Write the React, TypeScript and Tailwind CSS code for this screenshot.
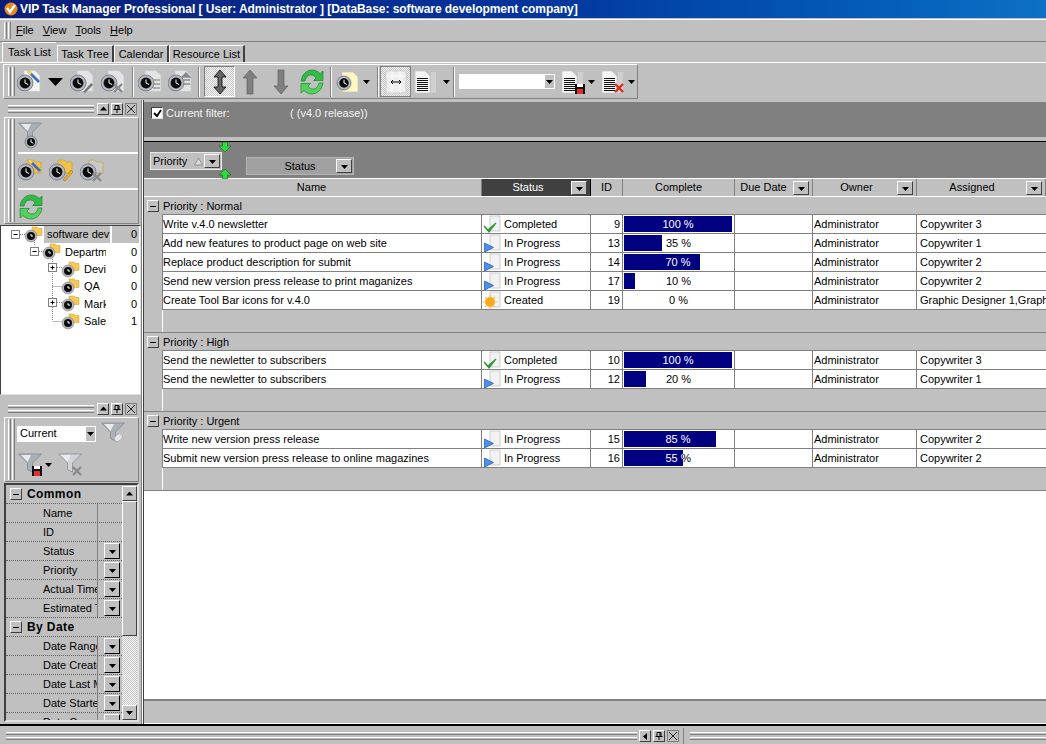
import type { ReactNode } from "react";

const FONT = "font-['Liberation_Sans','Noto_Sans',sans-serif]";

type Task = { name: string; status: string; id: number; pct: number; assigned: string };

const groups: { title: string; tasks: Task[] }[] = [
  {
    title: "Priority : Normal",
    tasks: [
      { name: "Write v.4.0 newsletter", status: "Completed", id: 9, pct: 100, assigned: "Copywriter 3" },
      { name: "Add new features to product page on web site", status: "In Progress", id: 13, pct: 35, assigned: "Copywriter 1" },
      { name: "Replace product description for submit", status: "In Progress", id: 14, pct: 70, assigned: "Copywriter 2" },
      { name: "Send new version press release to print maganizes", status: "In Progress", id: 17, pct: 10, assigned: "Copywriter 2" },
      { name: "Create Tool Bar icons for v.4.0", status: "Created", id: 19, pct: 0, assigned: "Graphic Designer 1,Graphic Designer 2" },
    ],
  },
  {
    title: "Priority : High",
    tasks: [
      { name: "Send the newletter to subscribers", status: "Completed", id: 10, pct: 100, assigned: "Copywriter 3" },
      { name: "Send the newletter to subscribers", status: "In Progress", id: 12, pct: 20, assigned: "Copywriter 1" },
    ],
  },
  {
    title: "Priority : Urgent",
    tasks: [
      { name: "Write new version press release", status: "In Progress", id: 15, pct: 85, assigned: "Copywriter 2" },
      { name: "Submit new version press release to online magazines", status: "In Progress", id: 16, pct: 55, assigned: "Copywriter 2" },
    ],
  },
];

const tree = [
  { label: "software dev", count: 0, indent: 23, selected: true },
  { label: "Departm", count: 0, indent: 41 },
  { label: "Devi", count: 0, indent: 60 },
  { label: "QA", count: 0, indent: 60 },
  { label: "Mark", count: 0, indent: 60 },
  { label: "Sale", count: 1, indent: 60 },
];

const commonRows = [
  { label: "Name" },
  { label: "ID" },
  { label: "Status", btn: true },
  { label: "Priority", btn: true },
  { label: "Actual Time", btn: true },
  { label: "Estimated Time", btn: true },
];
const dateRows = ["Date Range", "Date Created", "Date Last Modified", "Date Started", "Date Completed"];

const Tri = ({ dir = "down", color = "#000" }: { dir?: "down" | "up" | "left"; color?: string }) => (
  <svg width="7" height="7" viewBox="0 0 7 7" className="shrink-0">
    {dir === "down" && <path d="M0 2h7L3.5 6z" fill={color} />}
    {dir === "up" && <path d="M0 5.5h7L3.5 1.5z" fill={color} />}
    {dir === "left" && <path d="M5 0v7L1 3.5z" fill={color} />}
  </svg>
);

const Bevel = ({ className = "", children }: { className?: string; children?: ReactNode }) => (
  <div className={"flex items-center justify-center bg-[#c0c0c0] border border-t-white border-l-white border-r-[#404040] border-b-[#404040] shrink-0 " + className}>
    {children}
  </div>
);

const DropBtn = ({ className = "" }: { className?: string }) => (
  <Bevel className={"w-[16px] h-[14px] " + className}>
    <Tri />
  </Bevel>
);

const Minus = ({ className = "" }: { className?: string }) => (
  <Bevel className={"w-[12px] h-[12px] " + className}>
    <div className="w-[6px] h-px bg-black" />
  </Bevel>
);

// two thin raised lines used as the docking caption
const Grip = ({ className = "" }: { className?: string }) => (
  <div className={"flex flex-col gap-[2px] " + className}>
    <div className="h-[3px] bg-[#c0c0c0] border-y border-t-white border-b-[#808080]" />
    <div className="h-[3px] bg-[#c0c0c0] border-y border-t-white border-b-[#808080]" />
  </div>
);

const VGrip = ({ className = "" }: { className?: string }) => (
  <div className={"flex gap-px shrink-0 " + className}>
    <div className="w-[3px] border-x border-l-white border-r-[#808080]" />
    <div className="w-[3px] border-x border-l-white border-r-[#808080]" />
  </div>
);

const CaptionBtns = ({ first = "up" }: { first?: "up" | "left" }) => (
  <div className="flex gap-[2px] shrink-0">
    <Bevel className="w-[12px] h-[12px]">
      <Tri dir={first} />
    </Bevel>
    <Bevel className="w-[12px] h-[12px]">
      <svg width="8" height="8" viewBox="0 0 8 8">
        <path d="M2 .5h4v4H2zM.5 4.5h7M4 4.5V8M5 1v3" fill="none" stroke="#000" />
      </svg>
    </Bevel>
    <div className="w-[12px] h-[12px] border border-[#808080] flex items-center justify-center">
      <svg width="8" height="8" viewBox="0 0 8 8">
        <path d="M0 0l8 8M8 0L0 8" stroke="#000" strokeWidth="0.8" />
      </svg>
    </div>
  </div>
);

const Clock = ({ x = 8, y = 13, r = 8 }: { x?: number; y?: number; r?: number }) => (
  <g>
    <circle cx={x} cy={y} r={r} fill="#b4b8c2" stroke="#6c7078" strokeWidth="0.8" />
    <circle cx={x} cy={y} r={r * 0.68} fill="#0c0c0c" />
    <path d={`M${x} ${y - r * 0.45}V${y}L${x + r * 0.4} ${y + r * 0.2}`} stroke="#fff" strokeWidth="1" fill="none" />
  </g>
);

const Page = ({ x = 7, w = 16, y = 0.5, h = 21, fill = "#f2f2f2" }: { x?: number; w?: number; y?: number; h?: number; fill?: string }) => (
  <path d={`M${x} ${y}h${w - 5}l5 5v${h - 5}h-${w}z`} fill={fill} stroke="#c0c4c8" strokeWidth="0.7" />
);

const Folder = ({ fill = "#f2c14a" }: { fill?: string }) => (
  <path d="M9 5V1h6l2 2h6v11H12z" fill={fill} stroke="#c49a2c" strokeWidth="0.6" />
);

const Wand = () => (
  <g>
    <path d="M11 1l11 11" stroke="#3b6fc0" strokeWidth="2.6" />
    <path d="M11 1l3 3" stroke="#f6d75a" strokeWidth="3" />
  </g>
);

const Ico = ({ children, w = 24, h = 24 }: { children: ReactNode; w?: number; h?: number }) => (
  <svg width={w} height={h} viewBox={`0 0 ${w} ${h}`} className="shrink-0">
    {children}
  </svg>
);

const XMark = ({ x = 17, y = 18, color = "#8a8a8a", s = 4 }: { x?: number; y?: number; color?: string; s?: number }) => (
  <path d={`M${x - s} ${y - s}l${s * 2} ${s * 2}M${x + s} ${y - s}l-${s * 2} ${s * 2}`} stroke={color} strokeWidth="2.4" />
);

const Refresh = ({ size = 26 }: { size?: number }) => (
  <svg width={size} height={size} viewBox="0 0 26 26" className="shrink-0">
    <path d="M2 12C3 5 8 1 13 1c3.500 0 6 1.500 8 3.500l3-2.500v9.500h-9.500l2.500-2.500c-1-2-3-3-5-3-3 0-5 2-6 6z" fill="#34b84a" stroke="#158a2a" strokeWidth="0.7" />
    <path d="M24 14c-1 7-6 11-11 11-3.500 0-6-1.500-8-3.500l-3 2.500v-9.500h9.500l-2.500 2.500c1 2 3 3 5 3 3 0 5-2 6-6z" fill="#55d060" stroke="#158a2a" strokeWidth="0.7" />
  </svg>
);

const BigArrow = ({ up, down, color = "#707070" }: { up?: boolean; down?: boolean; color?: string }) => (
  <svg width="16" height="26" viewBox="0 0 16 26" className="shrink-0">
    {up && down ? (
      <path d="M8 1l6 7h-4v10h4l-6 7-6-7h4V8H2z" fill={color} stroke="#000" strokeWidth="0.8" />
    ) : up ? (
      <path d="M8 1l7 8h-4v16H5V9H1z" fill={color} stroke="#555" strokeWidth="0.6" />
    ) : (
      <path d="M5 1h6v16h4l-7 8-7-8h4z" fill={color} stroke="#555" strokeWidth="0.6" />
    )}
  </svg>
);

const Funnel = ({ dim }: { dim?: boolean }) => (
  <g>
    <path d="M0.500 2h23l-9 9v9l-5-2.500V11z" fill={dim ? "#d2d4d8" : "#aab0b8"} stroke="#7f838a" strokeWidth="0.7" />
    <path d="M3 3h10l-3.500 7z" fill="#e8eaee" />
  </g>
);

const ListPage = () => (
  <g>
    <Page x={1} w={15} y={1} h={22} fill="#f4f4f4" />
    <rect x="17" y="2" width="5" height="21" fill="#d0d0d0" />
    <path d="M3 8.500h11M3 10.500h11M3 12.500h11M3 14.500h11M3 16.500h11M3 18.500h11M3 20.500h11" stroke="#111" strokeWidth="1" />
  </g>
);

const Floppy = () => (
  <g>
    <rect x="14" y="14" width="10" height="10" fill="#111" />
    <rect x="16" y="14" width="6" height="3" fill="#fff" />
    <rect x="16" y="19" width="6" height="5" fill="#e03030" />
  </g>
);

const Sep = ({ className = "" }: { className?: string }) => (
  <div className={"w-[2px] h-[30px] border-x border-l-[#808080] border-r-white shrink-0 " + className} />
);

const Dither = "bg-[repeating-conic-gradient(#fff_0_25%,#c0c0c0_0_50%)] bg-[length:2px_2px]";

const MainToolbar = () => (
  <div className="h-[36px] flex items-start bg-[#c0c0c0]">
    <div className="ml-[3px] w-[635px] h-[35px] border border-t-white border-l-white border-r-[#808080] border-b-[#808080] flex items-center pl-[4px]">
      <VGrip className="h-[29px]" />
      <div className="ml-[2px] flex items-center">
        <Ico>
          <Page />
          <Clock />
          <Wand />
        </Ico>
        <svg width="15" height="8" viewBox="0 0 15 8" className="ml-[7px]">
          <path d="M0 0h15L7.500 8z" fill="#000" />
        </svg>
        <div className="ml-[7px]">
          <Ico>
            <Page fill="#e4e4e4" />
            <Clock />
            <path d="M13 22l8-9 2 2-8 8z" fill="#777" />
          </Ico>
        </div>
        <div className="ml-[7px]">
          <Ico>
            <Page fill="#e4e4e4" />
            <Clock />
            <XMark />
          </Ico>
        </div>
      </div>
      <Sep className="ml-[7px]" />
      <div className="ml-[4px]">
        <Ico>
          <Page fill="#e4e4e4" />
          <Clock />
          <path d="M15 10h7M15 14h7M15 18h7" stroke="#999" strokeWidth="1.6" />
        </Ico>
      </div>
      <div className="ml-[6px]">
        <Ico>
          <Page fill="#e4e4e4" />
          <Clock />
          <path d="M18 3l4 4h-8zM15 10h7M15 14h7" stroke="#888" strokeWidth="1.4" fill="#888" />
        </Ico>
      </div>
      <Sep className="ml-[6px]" />
      <div className={"ml-[4px] w-[31px] h-[31px] flex items-center justify-center border border-t-[#808080] border-l-[#808080] border-r-white border-b-white " + Dither}>
        <BigArrow up down color="#666" />
      </div>
      <div className="ml-[7px]">
        <BigArrow up color="#808080" />
      </div>
      <div className="ml-[15px]">
        <BigArrow down color="#808080" />
      </div>
      <div className="ml-[10px]">
        <Refresh />
      </div>
      <Sep className="ml-[5px]" />
      <div className="ml-[4px] flex items-center gap-[3px]">
        <Ico>
          <Page x={6} w={16} y={2} h={20} fill="#fff6c0" />
          <Clock x={8} y={13} r={7} />
        </Ico>
        <Tri />
      </div>
      <Sep className="ml-[7px]" />
      <div className={"ml-[1px] w-[31px] h-[31px] flex items-center justify-center border border-[#808080] " + Dither}>
        <svg width="24" height="24" viewBox="0 0 24 24">
          <rect x="2" y="1" width="20" height="22" fill="#eee" stroke="#ccc" />
          <path d="M8 1v22M16 1v22M2 6h20" stroke="#fff" />
          <path d="M7 12h10M7 12l2-2M7 12l2 2M17 12l-2-2M17 12l-2 2" stroke="#000" fill="none" />
        </svg>
      </div>
      <div className="ml-[3px] flex items-center gap-[5px]">
        <Ico>
          <ListPage />
        </Ico>
        <Tri />
      </div>
      <Sep className="ml-[3px]" />
      <div className="ml-[4px] w-[96px] h-[15px] bg-white flex justify-end items-center pr-px">
        <div className="w-[9px] h-[13px] bg-[#c0c0c0] flex items-center justify-center">
          <Tri />
        </div>
      </div>
      <div className="ml-[6px] flex items-center gap-[3px]">
        <Ico>
          <ListPage />
          <Floppy />
        </Ico>
        <Tri />
      </div>
      <div className="ml-[6px] flex items-center gap-[3px]">
        <Ico>
          <ListPage />
          <XMark x={18} y={18} color="#e02a1a" s={4} />
        </Ico>
        <Tri />
      </div>
    </div>
  </div>
);

const Status = ({ status }: { status: string }) => (
  <svg width="20" height="18" viewBox="0 0 20 18" className="shrink-0">
    <rect x="7" y="1" width="10" height="15" fill="#f2f2f2" stroke="#c4c4c4" strokeWidth="0.8" />
    {status === "Completed" && <path d="M1 11l4 4 8-7-7 9z" fill="#2f9a35" stroke="#2f9a35" strokeWidth="1.2" />}
    {status === "In Progress" && <path d="M1.500 9l9 4.500-9 4.500z" fill="#4f8fe8" stroke="#2b60c0" strokeWidth="0.8" />}
    {status === "Created" && (
      <g>
        <circle cx="7" cy="11" r="5" fill="#f7a81b" />
        <path d="M7 3.500v15M-.5 11h15M2 6l10 10M12 6L2 16" stroke="#f9bd55" strokeWidth="1.1" />
        <circle cx="7" cy="11" r="4" fill="#f7a81b" />
      </g>
    )}
  </svg>
);

const ProgressCell = ({ pct }: { pct: number }) => (
  <div className="relative w-[112px] shrink-0 h-full border-r border-[#808080] text-center leading-[18px]">
    <span>{pct} %</span>
    {pct > 0 && (
      <div className="absolute left-[1px] top-[1px] h-[16px] bg-[#000080] overflow-hidden" style={{ width: Math.round(pct * 1.08) }}>
        <div className="w-[108px] text-center text-white leading-[16px]">{pct} %</div>
      </div>
    )}
  </div>
);

const TaskRow = ({ t }: { t: Task }) => (
  <div className="flex h-[19px] bg-white border-b border-[#808080] whitespace-nowrap">
    <div className="w-[320px] shrink-0 border-x border-[#808080] leading-[18px] overflow-hidden">{t.name}</div>
    <div className="w-[109px] shrink-0 border-r border-[#808080] flex items-center pl-[1px] gap-[1px] overflow-hidden">
      <Status status={t.status} />
      <span>{t.status}</span>
    </div>
    <div className="w-[32px] shrink-0 border-r border-[#808080] text-right pr-[2px] leading-[18px]">{t.id}</div>
    <ProgressCell pct={t.pct} />
    <div className="w-[78px] shrink-0 border-r border-[#808080]" />
    <div className="w-[104px] shrink-0 border-r border-[#808080] pl-[1px] leading-[18px]">Administrator</div>
    <div className="flex-1 min-w-0 pl-[3px] leading-[18px] overflow-hidden">{t.assigned}</div>
  </div>
);

const HeaderCell = ({ label, w, btn, active, pad = "" }: { label: string; w: string; btn?: boolean; active?: boolean; pad?: string }) => (
  <div className={w + " shrink-0 relative h-full flex items-center justify-center border-r " + (active ? "bg-[#404040] text-white border-black" : "border-[#808080]")}>
    <span className={pad}>{label}</span>
    {btn && <DropBtn className="absolute right-[3px] top-[2px]" />}
  </div>
);

const Group = ({ title, tasks }: { title: string; tasks: Task[] }) => (
  <div>
    <div className="h-[18px] flex items-center pl-[3px] bg-[#c0c0c0]">
      <Minus />
      <span className="ml-[4px]">{title}</span>
    </div>
    <div className="ml-[18px] border-t border-[#808080] mt-[-1px]">
      {tasks.map((t) => (
        <TaskRow key={t.id} t={t} />
      ))}
    </div>
    <div className="h-[23px] pl-[18px] border-b border-[#808080]">
      <div className="h-full border-l border-white" />
    </div>
  </div>
);

const TaskGrid = () => (
  <div className="flex-1 min-w-0 flex flex-col">
    {/* current filter bar */}
    <div className="h-[35px] mt-[2px] bg-[#808080] flex items-start pl-[7px] pt-[5px] text-[#f4f4f4] shrink-0">
      <div className="w-[12px] h-[12px] bg-white border border-t-[#404040] border-l-[#404040] border-r-[#e0e0e0] border-b-[#e0e0e0] flex items-center justify-center">
        <svg width="9" height="9" viewBox="0 0 9 9">
          <path d="M1 4l3 3 4-6" stroke="#000" strokeWidth="1.8" fill="none" />
        </svg>
      </div>
      <span className="ml-[3px] w-[124px] leading-[13px]">Current filter:</span>
      <span className="leading-[13px]">( (v4.0 release))</span>
    </div>
    <div className="h-[5px] bg-[#c0c0c0] border-b border-black shrink-0" />
    {/* group-by panel */}
    <div className="h-[36px] bg-[#808080] relative flex items-start shrink-0">
      <div className="relative ml-[6px] mt-[10px] w-[72px] h-[18px] bg-[#c0c0c0] border border-[#e8e8e8] flex items-center pl-[2px]">
        <span>Priority</span>
        <svg width="9" height="9" viewBox="0 0 9 9" className="ml-[7px]">
          <path d="M.5 8h8L4.500 1z" fill="#d8d8d8" stroke="#808080" strokeWidth="0.7" />
        </svg>
        <DropBtn className="ml-auto mr-px" />
      </div>
      <div className="ml-[24px] mt-[15px] w-[108px] h-[18px] bg-[#a0a0a0] border border-[#b4b4b4] flex items-center justify-center relative">
        <span>Status</span>
        <DropBtn className="absolute right-[1px] top-[1px] bg-[#a0a0a0]" />
      </div>
      <svg width="12" height="10" viewBox="0 0 12 10" className="absolute left-[75px] top-0">
        <path d="M3.500 0h5v4H12L6 10 0 4h3.500z" fill="#2fdc3c" stroke="#0a6a12" strokeWidth="0.6" />
      </svg>
      <svg width="12" height="10" viewBox="0 0 12 10" className="absolute left-[75px] top-[27px]">
        <path d="M3.500 10h5V6H12L6 0 0 6h3.500z" fill="#2fdc3c" stroke="#0a6a12" strokeWidth="0.6" />
      </svg>
    </div>
    {/* column headers */}
    <div className="h-[19px] flex bg-[#c0c0c0] border-t border-white border-b border-[#808080] whitespace-nowrap shrink-0">
      <div className="w-[18px] shrink-0" />
      <HeaderCell label="Name" w="w-[320px]" pad="mr-[20px]" />
      <HeaderCell label="Status" w="w-[109px]" btn active pad="mr-[16px]" />
      <HeaderCell label="ID" w="w-[32px]" />
      <HeaderCell label="Complete" w="w-[112px]" />
      <HeaderCell label="Due Date" w="w-[78px]" btn pad="mr-[20px]" />
      <HeaderCell label="Owner" w="w-[104px]" btn pad="mr-[16px]" />
      <HeaderCell label="Assigned" w="w-[129px]" btn pad="mr-[18px]" />
    </div>
    {groups.map((g) => (
      <Group key={g.title} title={g.title} tasks={g.tasks} />
    ))}
    <div className="flex-1 bg-white" />
    <div className="h-[25px] bg-[#c0c0c0] border-t-2 border-t-[#808080] border-b border-b-white shrink-0" />
  </div>
);

const TreePanel = () => (
  <div className="mt-[1px] h-[170px] bg-white border border-t-[#404040] border-l-[#404040] border-r-[#e0e0e0] border-b-[#e0e0e0] relative overflow-hidden shrink-0">
    {tree.map((n) => (
      <div key={n.label} className="h-[17.3px] flex items-center relative">
        <div className="flex items-center shrink-0 h-full" style={{ marginLeft: n.indent }}>
          <svg width="20" height="17" viewBox="0 0 20 17">
            <path d="M8 6V1h5l1.500 1.500H18V9.500H10z" fill="#f6c955" stroke="#c49a2c" strokeWidth="0.5" />
            <circle cx="7" cy="10" r="6" fill="#b4b8c2" stroke="#707070" strokeWidth="0.5" />
            <circle cx="7" cy="10" r="4" fill="#0c0c0c" />
            <path d="M7 8v2h2" stroke="#fff" fill="none" />
          </svg>
        </div>
        <span className={"whitespace-nowrap overflow-hidden pl-[3px] " + (n.selected ? "w-[66px] pr-[3px] bg-[#c0c0c0]" : n.indent === 41 ? "w-[44px]" : "w-[25px]")}>{n.label}</span>
        <span className={"absolute right-[1px] pr-[2px] w-[27px] text-right " + (n.selected ? "bg-[#c0c0c0]" : "")}>{n.count}</span>
      </div>
    ))}
    {/* connector lines of the tree */}
    <svg className="absolute left-0 top-0" width="62" height="110" viewBox="0 0 62 110">
      <path d="M33.500 14V20M19 8.500h6M38 25.500h5M51.500 31V95M51.500 60.500h10M51.500 95.500h10M56 41.500h5M56 76.500h5" stroke="#808080" strokeDasharray="1 1" fill="none" />
      {[[14.5, 8.5], [33.5, 25.5], [51.5, 41.5], [51.5, 76.5]].map(([x, y], i) => (
        <g key={i}>
          <rect x={x - 4} y={y - 4} width="8" height="8" fill="#fff" stroke="#808080" />
          <path d={`M${x - 2} ${y}h4${i > 1 ? `M${x} ${y - 2}v4` : ""}`} stroke="#000" />
        </g>
      ))}
    </svg>
  </div>
);

const PropRow = ({ label, btn }: { label: string; btn?: boolean }) => (
  <div className="h-[19px] flex border-b border-dotted border-[#606060] whitespace-nowrap">
    <div className="w-[92px] shrink-0 border-r border-[#808080] pl-[37px] pr-[3px] overflow-hidden leading-[18px]">{label}</div>
    {btn && (
      <Bevel className="ml-[6px] w-[16px] h-[16px] mt-[1px] border-b-black border-r-black">
        <Tri />
      </Bevel>
    )}
  </div>
);

const PropHead = ({ label }: { label: string }) => (
  <div className="h-[19px] flex items-center pl-[4px] border-b border-dotted border-[#606060]">
    <Minus />
    <span className="ml-[5px] font-bold text-[12px] tracking-[0.4px]">{label}</span>
  </div>
);

const FilterGrid = () => (
  <div className="h-[239px] border-2 border-t-[#404040] border-l-[#404040] border-r-[#e0e0e0] border-b-[#e0e0e0] ml-[4px] mr-[2px] mt-[1px] flex overflow-hidden shrink-0">
    <div className="w-[116px] shrink-0 overflow-hidden">
      <PropHead label="Common" />
      {commonRows.map((r) => (
        <PropRow key={r.label} label={r.label} btn={r.btn} />
      ))}
      <PropHead label="By Date" />
      {dateRows.map((r) => (
        <PropRow key={r} label={r} btn />
      ))}
    </div>
    <div className="flex-1 flex flex-col pt-[1px]">
      <Bevel className="h-[15px]">
        <Tri dir="up" />
      </Bevel>
      <Bevel className="h-[135px]" />
      <div className={"flex-1 " + Dither} />
      <Bevel className="h-[15px]">
        <Tri />
      </Bevel>
    </div>
  </div>
);

const LeftColumn = () => (
  <div className="w-[142px] shrink-0 flex flex-col border-r border-[#808080] overflow-hidden">
    <div className="h-[17px] flex items-center pl-[8px] pr-[4px] gap-[2px] shrink-0">
      <Grip className="flex-1 mr-px" />
      <CaptionBtns />
    </div>
    <div className="h-[107px] ml-[4px] mr-[2px] border border-t-white border-l-white border-r-[#808080] border-b-[#808080] flex shrink-0">
      <VGrip className="ml-[3px] my-[1px]" />
      <div className="flex-1 ml-[3px] flex flex-col">
        <div className="h-[36px] border-b-2 border-b-white flex items-center">
          <Ico w={26} h={28}>
            <Funnel />
            <Clock x={13} y={21} r={6} />
          </Ico>
        </div>
        <div className="h-[36px] border-b-2 border-b-white flex items-center gap-[7px]">
          <Ico>
            <Folder />
            <Clock />
            <Wand />
          </Ico>
          <Ico>
            <Folder />
            <Clock />
            <path d="M14 21l8-10 2 2-8 9z" fill="#e8b030" stroke="#8a6a10" strokeWidth="0.5" />
          </Ico>
          <Ico>
            <Folder fill="#c8c8c8" />
            <Clock />
            <XMark />
          </Ico>
        </div>
        <div className="flex-1 flex items-center">
          <Refresh />
        </div>
      </div>
    </div>
    <TreePanel />
    <div className="h-[17px] mt-[5px] flex items-center pl-[8px] pr-[4px] gap-[2px] shrink-0">
      <Grip className="flex-1 mr-px" />
      <CaptionBtns />
    </div>
    <div className="h-[65px] ml-[4px] mr-[2px] border border-t-white border-l-white border-r-[#808080] border-b-[#808080] flex shrink-0">
      <VGrip className="ml-[3px] my-[1px]" />
      <div className="flex-1 flex flex-col ml-[2px]">
        <div className="h-[31px] flex items-center">
          <div className="w-[79px] h-[16px] bg-white flex items-center justify-between pl-[3px] pr-px">
            <span>Current</span>
            <div className="w-[9px] h-[14px] bg-[#c0c0c0] flex items-center justify-center">
              <Tri />
            </div>
          </div>
          <div className="ml-[5px]">
            <Ico w={26} h={26}>
              <Funnel />
              <rect x="13" y="14" width="9" height="6" rx="3" transform="rotate(-40 17 17)" fill="#e4e4e4" stroke="#999" strokeWidth="0.6" />
            </Ico>
          </div>
        </div>
        <div className="h-[31px] flex items-center pl-px">
          <Ico w={24} h={26}>
            <Funnel />
            <Floppy />
          </Ico>
          <div className="ml-[3px]">
            <Tri />
          </div>
          <div className="ml-[6px]">
            <Ico w={26} h={26}>
              <Funnel dim />
              <XMark x={19} y={19} />
            </Ico>
          </div>
        </div>
      </div>
    </div>
    <FilterGrid />
  </div>
);

const App = () => (
  <div className={"w-[1046px] h-[744px] overflow-hidden flex flex-col bg-[#c0c0c0] text-black text-[11px] " + FONT}>
    <div className="h-[18px] shrink-0 flex items-center pl-[4px] bg-gradient-to-r from-[#0a1e78] via-[#04349c] via-50% to-[#0d70c4] text-white font-bold text-[12px] tracking-[-0.06px] whitespace-nowrap">
      <svg width="14" height="14" viewBox="0 0 14 14" className="shrink-0">
        <circle cx="7" cy="7" r="6.500" fill="#e88a1c" />
        <path d="M3 6l3 4 5-7" stroke="#fff" strokeWidth="2.400" fill="none" />
      </svg>
      <span className="ml-[2px]">VIP Task Manager Professional [ User: Administrator ] [DataBase: software development company]</span>
    </div>
    <div className="h-[23px] shrink-0 mt-px border-t border-white border-b border-b-[#808080] flex items-center pl-[4px]">
      <VGrip className="h-[17px]" />
      <div className="ml-[5px] flex gap-[9px]">
        {["File", "View", "Tools", "Help"].map((m) => (
          <span key={m}>
            <span className="underline">{m[0]}</span>
            {m.slice(1)}
          </span>
        ))}
      </div>
    </div>
    <div className="h-[21px] shrink-0 flex items-end pl-[2px] border-b border-white">
      <div className="w-[54px] h-[20px] flex items-center justify-center border-t border-l border-white">Task List</div>
      <div className="ml-[1px] w-[57px] h-[17px] flex items-center justify-center border-l border-white border-t border-r-2 border-r-[#404040] bg-[#c0c0c0]">Task Tree</div>
      <div className="w-[55px] h-[17px] flex items-center justify-center border-l border-white border-t border-r-2 border-r-[#404040]">Calendar</div>
      <div className="w-[76px] h-[17px] flex items-center justify-center border-l border-white border-t border-r-2 border-r-[#404040]">Resource List</div>
    </div>
    <div className="pt-[1px] shrink-0">
      <MainToolbar />
    </div>
    <div className="flex-1 min-h-0 flex border-b-2 border-b-black">
      <LeftColumn />
      <div className="w-px bg-white shrink-0" />
      <div className="w-px bg-[#404040] shrink-0" />
      <TaskGrid />
    </div>
    <div className="h-[18px] shrink-0 flex items-center pt-[2px]">
      <Grip className="w-[631px] ml-[6px]" />
      <div className="ml-[2px]">
        <CaptionBtns first="left" />
      </div>
      <div className="ml-[4px] w-px h-full bg-[#808080]" />
      <Grip className="flex-1 ml-[6px]" />
    </div>
  </div>
);

export default App;
